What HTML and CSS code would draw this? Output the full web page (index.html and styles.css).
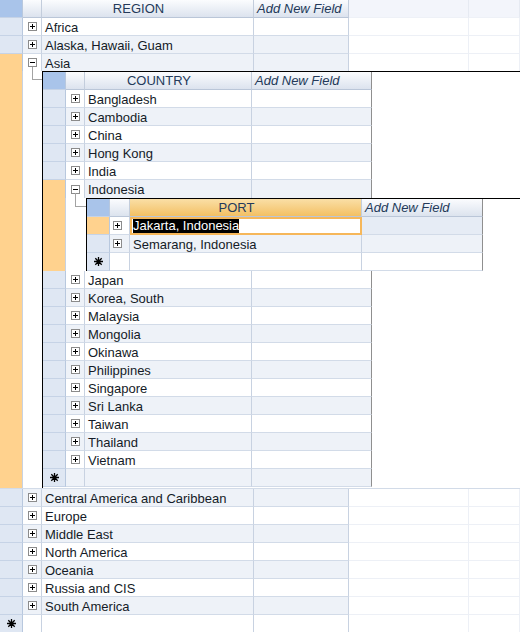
FILE: index.html
```html
<!DOCTYPE html>
<html lang="en">
<head>
    <meta charset="UTF-8">
    <title>Regions</title>
    <link rel="stylesheet" href="styles.css">
</head>
<body>
    <div class="grid outer">
        <div class="row head">
            <div class="sel corner"></div>
            <div class="w-exp"></div>
            <div class="cap w-region">REGION</div>
            <div class="newf w-add">Add New Field</div>
            <div class="hfill f1"></div>
            <div class="hfill f2"></div>
        </div>
        <div class="row">
            <div class="sel"></div>
            <div class="exp"><div class="box"></div></div>
            <div class="cell w-region">Africa</div>
            <div class="cell w-add"></div>
            <div class="fill f1"></div>
            <div class="fill f2"></div>
        </div>
        <div class="row alt">
            <div class="sel"></div>
            <div class="exp"><div class="box"></div></div>
            <div class="cell w-region">Alaska, Hawaii, Guam</div>
            <div class="cell w-add"></div>
            <div class="fill f1"></div>
            <div class="fill f2"></div>
        </div>
        <div class="row alt open">
            <div class="sel hot"></div>
            <div class="exp"><div class="box minus"></div></div>
            <div class="cell w-region">Asia</div>
            <div class="cell w-add"></div>
            <div class="fill f1"></div>
            <div class="fill f2"></div>
        </div>

        <!-- Asia -> countries -->
        <div class="xrow">
            <div class="sel hot"></div>
            <div class="stem"><div class="elbow"></div></div>
            <div class="detail">
                <div class="grid country">
                    <div class="row head">
                        <div class="sel corner"></div>
                        <div class="w-exp"></div>
                        <div class="cap w-country">COUNTRY</div>
                        <div class="newf w-cadd edge">Add New Field</div>
                    </div>
                    <div class="row">
                        <div class="sel"></div>
                        <div class="exp"><div class="box"></div></div>
                        <div class="cell w-country">Bangladesh</div>
                        <div class="cell w-cadd edge"></div>
                    </div>
                    <div class="row alt">
                        <div class="sel"></div>
                        <div class="exp"><div class="box"></div></div>
                        <div class="cell w-country">Cambodia</div>
                        <div class="cell w-cadd edge"></div>
                    </div>
                    <div class="row">
                        <div class="sel"></div>
                        <div class="exp"><div class="box"></div></div>
                        <div class="cell w-country">China</div>
                        <div class="cell w-cadd edge"></div>
                    </div>
                    <div class="row alt">
                        <div class="sel"></div>
                        <div class="exp"><div class="box"></div></div>
                        <div class="cell w-country">Hong Kong</div>
                        <div class="cell w-cadd edge"></div>
                    </div>
                    <div class="row">
                        <div class="sel"></div>
                        <div class="exp"><div class="box"></div></div>
                        <div class="cell w-country">India</div>
                        <div class="cell w-cadd edge"></div>
                    </div>
                    <div class="row alt open">
                        <div class="sel hot"></div>
                        <div class="exp"><div class="box minus"></div></div>
                        <div class="cell w-country">Indonesia</div>
                        <div class="cell w-cadd edge"></div>
                    </div>

                    <!-- Indonesia -> ports -->
                    <div class="xrow">
                        <div class="sel hot"></div>
                        <div class="stem wide"><div class="elbow"></div></div>
                        <div class="detail">
                            <div class="grid port">
                                <div class="row head">
                                    <div class="sel corner"></div>
                                    <div class="w-exp wide"></div>
                                    <div class="cap w-port sorted">PORT</div>
                                    <div class="newf w-padd edge">Add New Field</div>
                                </div>
                                <div class="row">
                                    <div class="sel hot"></div>
                                    <div class="exp wide"><div class="box"></div></div>
                                    <div class="cell w-port edit"><span class="hl">Jakarta, Indonesia</span></div>
                                    <div class="cell w-padd edge soft"></div>
                                </div>
                                <div class="row alt">
                                    <div class="sel"></div>
                                    <div class="exp wide"><div class="box"></div></div>
                                    <div class="cell w-port">Semarang, Indonesia</div>
                                    <div class="cell w-padd edge"></div>
                                </div>
                                <div class="row">
                                    <div class="sel"><svg class="star" width="9" height="9" viewBox="0 0 9 9"><path d="M4.5 0v9M0 4.5h9M1.3 1.3l6.4 6.4M7.7 1.3l-6.4 6.4" stroke="#000" stroke-width="1.3"/></svg></div>
                                    <div class="exp wide"></div>
                                    <div class="cell w-port"></div>
                                    <div class="cell w-padd edge"></div>
                                </div>
                            </div>
                        </div>
                    </div>

                    <div class="row">
                        <div class="sel"></div>
                        <div class="exp"><div class="box"></div></div>
                        <div class="cell w-country">Japan</div>
                        <div class="cell w-cadd edge"></div>
                    </div>
                    <div class="row alt">
                        <div class="sel"></div>
                        <div class="exp"><div class="box"></div></div>
                        <div class="cell w-country">Korea, South</div>
                        <div class="cell w-cadd edge"></div>
                    </div>
                    <div class="row">
                        <div class="sel"></div>
                        <div class="exp"><div class="box"></div></div>
                        <div class="cell w-country">Malaysia</div>
                        <div class="cell w-cadd edge"></div>
                    </div>
                    <div class="row alt">
                        <div class="sel"></div>
                        <div class="exp"><div class="box"></div></div>
                        <div class="cell w-country">Mongolia</div>
                        <div class="cell w-cadd edge"></div>
                    </div>
                    <div class="row">
                        <div class="sel"></div>
                        <div class="exp"><div class="box"></div></div>
                        <div class="cell w-country">Okinawa</div>
                        <div class="cell w-cadd edge"></div>
                    </div>
                    <div class="row alt">
                        <div class="sel"></div>
                        <div class="exp"><div class="box"></div></div>
                        <div class="cell w-country">Philippines</div>
                        <div class="cell w-cadd edge"></div>
                    </div>
                    <div class="row">
                        <div class="sel"></div>
                        <div class="exp"><div class="box"></div></div>
                        <div class="cell w-country">Singapore</div>
                        <div class="cell w-cadd edge"></div>
                    </div>
                    <div class="row alt">
                        <div class="sel"></div>
                        <div class="exp"><div class="box"></div></div>
                        <div class="cell w-country">Sri Lanka</div>
                        <div class="cell w-cadd edge"></div>
                    </div>
                    <div class="row">
                        <div class="sel"></div>
                        <div class="exp"><div class="box"></div></div>
                        <div class="cell w-country">Taiwan</div>
                        <div class="cell w-cadd edge"></div>
                    </div>
                    <div class="row alt">
                        <div class="sel"></div>
                        <div class="exp"><div class="box"></div></div>
                        <div class="cell w-country">Thailand</div>
                        <div class="cell w-cadd edge"></div>
                    </div>
                    <div class="row">
                        <div class="sel"></div>
                        <div class="exp"><div class="box"></div></div>
                        <div class="cell w-country">Vietnam</div>
                        <div class="cell w-cadd edge"></div>
                    </div>
                    <div class="row alt">
                        <div class="sel"><svg class="star" width="9" height="9" viewBox="0 0 9 9"><path d="M4.5 0v9M0 4.5h9M1.3 1.3l6.4 6.4M7.7 1.3l-6.4 6.4" stroke="#000" stroke-width="1.3"/></svg></div>
                        <div class="exp"></div>
                        <div class="cell w-country"></div>
                        <div class="cell w-cadd edge"></div>
                    </div>
                </div>
            </div>
        </div>

        <div class="row alt">
            <div class="sel"></div>
            <div class="exp"><div class="box"></div></div>
            <div class="cell w-region">Central America and Caribbean</div>
            <div class="cell w-add"></div>
            <div class="fill f1"></div>
            <div class="fill f2"></div>
        </div>
        <div class="row">
            <div class="sel"></div>
            <div class="exp"><div class="box"></div></div>
            <div class="cell w-region">Europe</div>
            <div class="cell w-add"></div>
            <div class="fill f1"></div>
            <div class="fill f2"></div>
        </div>
        <div class="row alt">
            <div class="sel"></div>
            <div class="exp"><div class="box"></div></div>
            <div class="cell w-region">Middle East</div>
            <div class="cell w-add"></div>
            <div class="fill f1"></div>
            <div class="fill f2"></div>
        </div>
        <div class="row">
            <div class="sel"></div>
            <div class="exp"><div class="box"></div></div>
            <div class="cell w-region">North America</div>
            <div class="cell w-add"></div>
            <div class="fill f1"></div>
            <div class="fill f2"></div>
        </div>
        <div class="row alt">
            <div class="sel"></div>
            <div class="exp"><div class="box"></div></div>
            <div class="cell w-region">Oceania</div>
            <div class="cell w-add"></div>
            <div class="fill f1"></div>
            <div class="fill f2"></div>
        </div>
        <div class="row">
            <div class="sel"></div>
            <div class="exp"><div class="box"></div></div>
            <div class="cell w-region">Russia and CIS</div>
            <div class="cell w-add"></div>
            <div class="fill f1"></div>
            <div class="fill f2"></div>
        </div>
        <div class="row alt">
            <div class="sel"></div>
            <div class="exp"><div class="box"></div></div>
            <div class="cell w-region">South America</div>
            <div class="cell w-add"></div>
            <div class="fill f1"></div>
            <div class="fill f2"></div>
        </div>
        <div class="row">
            <div class="sel"><svg class="star" width="9" height="9" viewBox="0 0 9 9"><path d="M4.5 0v9M0 4.5h9M1.3 1.3l6.4 6.4M7.7 1.3l-6.4 6.4" stroke="#000" stroke-width="1.3"/></svg></div>
            <div class="exp"></div>
            <div class="cell w-region"></div>
            <div class="cell w-add"></div>
            <div class="fill f1"></div>
            <div class="fill f2"></div>
        </div>
    </div>
</body>
</html>
```

FILE: styles.css
```css
*{
    margin: 0;
    padding: 0;
    box-sizing: border-box;
}
body{
    width: 520px;
    height: 632px;
    overflow: hidden;
    background: #fff;
    font-family: "Liberation Sans", Arial, sans-serif;
    font-size: 13px;
    color: #141b27;
}

/* rows and cells */
.row{
    display: flex;
    height: 18px;
}
.row > div{
    flex: none;
    height: 100%;
    border-right: 1px solid #c8d2e1;
    border-bottom: 1px solid #d2dbe8;
    line-height: 19px;
    white-space: nowrap;
    overflow: hidden;
}
.cell{
    padding-left: 3px;
    background: #fff;
}
.sel{
    width: 23px;
    background: #dfe7f3;
    display: flex;
    align-items: center;
    justify-content: center;
}
.row > .sel{
    border-right-color: #b8c8de;
    border-bottom-color: #c6d3e6;
}
.sel.hot{
    background: #ffd28e;
}
.exp{
    width: 19px;
    padding-left: 5px;
    display: flex;
    align-items: center;
    background: #fff;
}
.exp.wide{
    width: 20px;
    padding-left: 3px;
}
.alt .cell,
.alt .exp{
    background: #eef2f8;
}
.row > .fill{
    background: #fff;
    border-right-color: #edf0f6;
    border-bottom-color: #edf0f6;
}

/* column widths */
.w-exp{ width: 19px; }
.w-exp.wide{ width: 20px; }
.w-region{ width: 212px; }
.w-add{ width: 95px; }
.f1{ width: 120px; }
.f2{ width: 51px; }
.w-country{ width: 167px; }
.w-cadd{ width: 120px; }
.w-port{ width: 232px; }
.w-padd{ width: 121px; }
.row > .edge{ border-right-color: #8f8f8f; }

/* header */
.head > div{
    background: linear-gradient(#fbfcfe, #dce3ee);
    border-right-color: #c3cddc;
    border-bottom-color: #bac6d8;
    color: #243a5a;
    line-height: 17px;
}
.head > .corner{
    background: #a9c4ea;
}
.head > .hfill{
    background: #f3f5fb;
    border-right-color: #e6eaf2;
    border-bottom-color: #eef1f7;
}
.head > .sorted{
    background: linear-gradient(#fadfa6, #f3c064);
}
.cap{
    text-align: center;
    padding-right: 18px;
}
.newf{
    font-style: italic;
    padding-left: 3px;
}

/* expand buttons */
.box{
    width: 9px;
    height: 9px;
    border: 1px solid #8b8b8b;
    background:
        linear-gradient(#000, #000) center / 5px 1px no-repeat,
        linear-gradient(#000, #000) center / 1px 5px no-repeat,
        #fff;
}
.box.minus{
    background: linear-gradient(#000, #000) center / 5px 1px no-repeat, #fff;
}
.row.open{
    height: 17px;
}
.country .row.open{
    height: 18px;
}
.row.open > div{
    border-bottom: none;
}
.open .exp{
    position: relative;
    background: #fff;
}
.open .exp::after{
    content: "";
    position: absolute;
    left: 9px;
    bottom: 0;
    height: 4px;
    border-left: 1px solid #a3a3a3;
}
.country .open .exp::after{
    height: 5px;
}

/* detail (child grid) rows */
.xrow{
    display: flex;
}
.xrow > .sel{
    display: block;
    border-right: 1px solid #c8d2e1;
}
.stem{
    width: 19px;
    background: #fff;
}
.stem.wide{
    width: 20px;
}
.elbow{
    margin-left: 9px;
    height: 9px;
    border-left: 1px solid #a3a3a3;
    border-bottom: 1px solid #a3a3a3;
}
.detail{
    flex: 1;
    background: #fff;
    border-top: 1px solid #000;
    border-left: 1px solid #000;
}
.outer > .xrow{
    border-bottom: 1px solid #d2dbe8;
}
.outer > .xrow > .detail{
    padding-bottom: 1px;
}
.country{
    width: 329px;
}
.country .xrow{
    width: 477px;
}

/* focused editor cell */
.row > .edit{
    border: 2px solid #f6b75a;
    padding-left: 1px;
    line-height: 14px;
}
.hl{
    background: #000;
    color: #fff;
}
.alt .soft,
.soft{
    background: #e6ecf5;
}
.star{
    display: block;
}
```
